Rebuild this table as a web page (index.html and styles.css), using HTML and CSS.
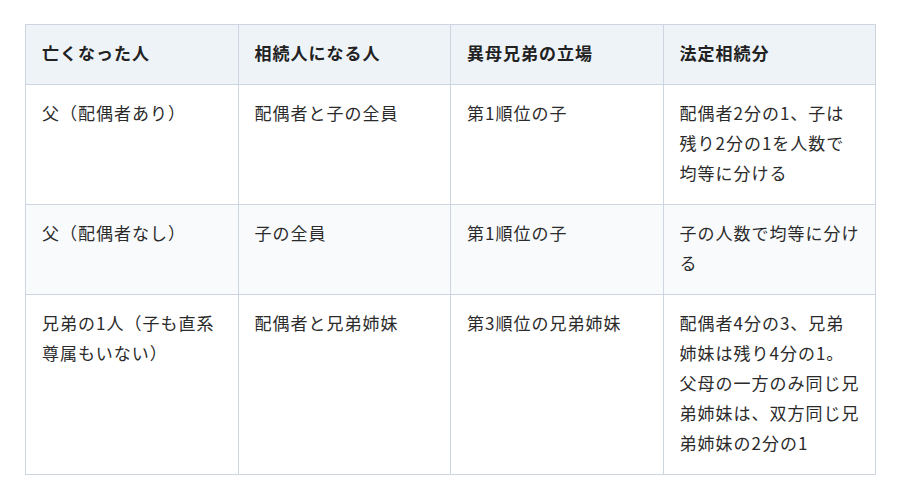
FILE: index.html
```html
<!DOCTYPE html>
<html lang="ja">
<head>
<meta charset="utf-8">
<link rel="stylesheet" href="styles.css">
</head>
<body>
<table class="tbl">
  <thead>
    <tr>
      <th>亡くなった人</th>
      <th>相続人になる人</th>
      <th>異母兄弟の立場</th>
      <th>法定相続分</th>
    </tr>
  </thead>
  <tbody>
    <tr>
      <td>父（配偶者あり）</td>
      <td>配偶者と子の全員</td>
      <td>第1順位の子</td>
      <td>配偶者2分の1、子は残り2分の1を人数で均等に分ける</td>
    </tr>
    <tr class="alt">
      <td>父（配偶者なし）</td>
      <td>子の全員</td>
      <td>第1順位の子</td>
      <td>子の人数で均等に分ける</td>
    </tr>
    <tr>
      <td>兄弟の1人（子も直系尊属もいない）</td>
      <td>配偶者と兄弟姉妹</td>
      <td>第3順位の兄弟姉妹</td>
      <td>配偶者4分の3、兄弟姉妹は残り4分の1。父母の一方のみ同じ兄弟姉妹は、双方同じ兄弟姉妹の2分の1</td>
    </tr>
  </tbody>
</table>
</body>
</html>
```
FILE: styles.css
```css
html, body {
  margin: 0;
  padding: 0;
  background: #ffffff;
}
body {
  padding: 24px 25px;
  font-family: "Noto Sans CJK JP", "Noto Sans", sans-serif;
  color: #2b2b2b;
}
.tbl {
  width: 851px;
  border-collapse: collapse;
  table-layout: fixed;
  font-size: 17px;
  letter-spacing: 1px;
  line-height: 30px;
}
.tbl th, .tbl td {
  border: 1px solid #cdd6e0;
  padding: 13px 15px 16px 16px;
  text-align: left;
  vertical-align: top;
  word-break: break-all;
}
.tbl th {
  background: #eef3f8;
  font-weight: 700;
  color: #222222;
}
.tbl tr.alt td {
  background: #f8fafc;
}
```
